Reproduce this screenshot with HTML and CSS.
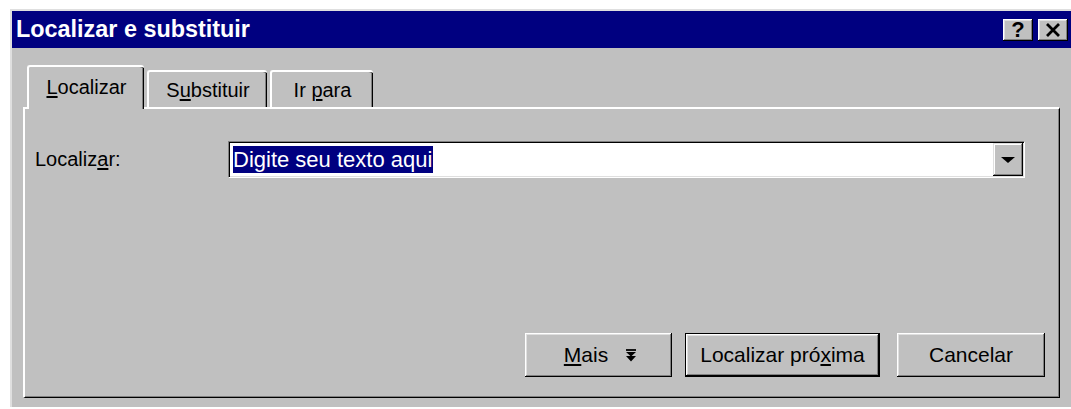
FILE: index.html
```html
<!DOCTYPE html>
<html lang="pt">
<head>
<meta charset="utf-8">
<title>Localizar e substituir</title>
<link rel="stylesheet" href="styles.css">
</head>
<body>
<div class="window">
  <div class="titlebar">
    <span class="title">Localizar e substituir</span>
    <div class="controls">
      <span class="ctl ctl-help">?</span>
      <span class="ctl">
        <svg width="16" height="14" viewBox="0 0 16 14"><path d="M2 1 L14 13 M14 1 L2 13" stroke="#000" stroke-width="2.8" fill="none"/></svg>
      </span>
    </div>
  </div>
  <div class="body">
    <div class="tabs">
      <div class="tab tab-active"><span><u>L</u>ocalizar</span></div>
      <div class="tab tab-sub"><span>S<u>u</u>bstituir</span></div>
      <div class="tab tab-go"><span>Ir <u>p</u>ara</span></div>
    </div>
    <div class="panel">
      <div class="field">
        <label class="label">Localiz<u>a</u>r:</label>
        <div class="combo">
          <span class="selected">Digite seu texto aqui</span>
          <span class="drop"><i class="tri"></i></span>
        </div>
      </div>
      <div class="actions">
        <button class="btn btn-more"><span><u>M</u>ais</span>
          <svg width="12" height="13" viewBox="0 0 12 13"><path d="M1 1 H11" stroke="#000" stroke-width="1.8"/><path d="M1 3 H11 L6 7.5 Z M1 7 H11 L6 12.5 Z" fill="#000"/></svg>
        </button>
        <button class="btn btn-default"><span>Localizar pró<u>x</u>ima</span></button>
        <button class="btn btn-cancel"><span>Cancelar</span></button>
      </div>
    </div>
  </div>
</div>
</body>
</html>
```
FILE: styles.css
```css
html, body {
  margin: 0;
  background: #fff;
  overflow: hidden;
}

body {
  font-family: "Liberation Sans", Arial, sans-serif;
  color: #000;
}

u {
  text-decoration-thickness: 1.5px;
  text-underline-offset: 2px;
}

.window {
  margin: 9px 0 0 10px;
  height: 398px;
  box-sizing: border-box;
  background: #c0c0c0;
  border-top: 2px solid #dfdfdf;
  border-left: 2px solid #dfdfdf;
}

/* caption bar */
.titlebar {
  height: 37px;
  background: #000080;
  display: flex;
  align-items: center;
  justify-content: space-between;
  padding: 0 3px 0 4px;
}

.title {
  color: #fff;
  font-weight: bold;
  font-size: 23.4px;
}

.controls {
  display: flex;
  gap: 5px;
}

.ctl {
  width: 30px;
  height: 22px;
  box-sizing: border-box;
  background: #c0c0c0;
  display: flex;
  align-items: center;
  justify-content: center;
  box-shadow: inset -1px -1px #000, inset 1px 1px #fff, inset -2px -2px #808080, inset 2px 2px #dfdfdf;
}

.ctl-help {
  font-weight: bold;
  font-size: 22px;
  line-height: 1;
  padding-top: 1px;
}

/* client area */
.body {
  padding: 17px 11px 0 11px;
}

.tabs {
  display: flex;
  align-items: flex-end;
  padding-left: 4px;
  height: 42px;
}

.tab {
  box-sizing: border-box;
  height: 37px;
  display: flex;
  align-items: center;
  justify-content: center;
  font-size: 20px;
  border-radius: 3px 3px 0 0;
  background: #c0c0c0;
  border-top: 2px solid #fff;
  border-left: 2px solid #fff;
  box-shadow: inset -1px 0 #000, inset -2px 0 #808080;
  padding-top: 2px;
}

.tab-active {
  width: 117px;
  height: 44px;
  margin-bottom: -2px;
  position: relative;
  z-index: 1;
  padding-top: 0;
  padding-bottom: 2px;
}

.tab-sub {
  width: 120px;
  margin-left: 3px;
}

.tab-go {
  width: 103px;
  margin-left: 3px;
}

.panel {
  box-sizing: border-box;
  height: 291px;
  border-top: 2px solid #fff;
  border-left: 2px solid #fff;
  border-right: 1px solid #000;
  border-bottom: 1px solid #000;
  box-shadow: inset -1px -1px #808080;
  padding: 32px 14px 20px 10px;
  display: flex;
  flex-direction: column;
}

.field {
  display: grid;
  grid-template-columns: 193px 797px;
  align-items: center;
}

.label {
  font-size: 20px;
}

.combo {
  box-sizing: border-box;
  height: 37px;
  background: #fff;
  border-top: 1px solid #808080;
  border-left: 1px solid #808080;
  border-right: 1px solid #fff;
  border-bottom: 1px solid #fff;
  box-shadow: inset 1px 1px #000, inset -1px -1px #dfdfdf;
  padding: 1px;
  display: flex;
  align-items: center;
}

.selected {
  margin-left: 3px;
  background: #000080;
  color: #fff;
  font-size: 22px;
  line-height: 27px;
  padding-right: 1px;
}

.drop {
  margin-left: auto;
  width: 30px;
  height: 33px;
  background: #c0c0c0;
  box-shadow: inset -1px -1px #000, inset 1px 1px #dfdfdf, inset -2px -2px #808080, inset 2px 2px #fff;
  display: flex;
  align-items: center;
  justify-content: center;
}

.tri {
  width: 0;
  height: 0;
  border-left: 7px solid transparent;
  border-right: 7px solid transparent;
  border-top: 6px solid #000;
}

.actions {
  margin-top: auto;
  display: flex;
  justify-content: flex-end;
}

.btn {
  box-sizing: border-box;
  height: 44px;
  background: #c0c0c0;
  border: none;
  font-family: "Liberation Sans", Arial, sans-serif;
  font-size: 21px;
  color: #000;
  padding: 0;
  display: flex;
  align-items: center;
  justify-content: center;
  white-space: nowrap;
  box-shadow: inset -1px -1px #000, inset 1px 1px #fff, inset -2px -2px #808080, inset 2px 2px #dfdfdf;
}

.btn-more {
  width: 147px;
  padding-left: 4px;
  gap: 17px;
}

.btn-default {
  width: 195px;
  margin-left: 13px;
  border: 1px solid #000;
}

.btn-cancel {
  width: 148px;
  margin-left: 17px;
}
```
